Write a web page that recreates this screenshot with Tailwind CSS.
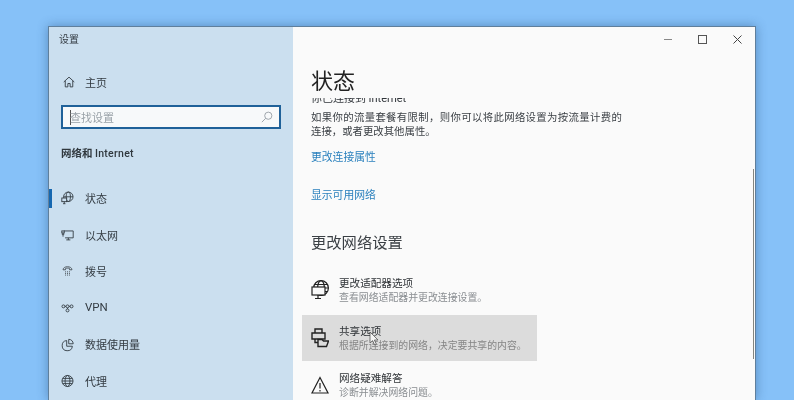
<!DOCTYPE html>
<html lang="zh-CN">
<head>
<meta charset="UTF-8">
<title>设置</title>
<script src="https://cdn.jsdelivr.net/npm/@tailwindcss/browser@4"></script>
</head>
<body class="bg-[#86c1f8] font-['Noto_Sans_CJK_SC','Noto_Sans',sans-serif] overflow-hidden h-[400px]">
<div class="pl-[48px] pt-[26px]">
  <div class="w-[708px] h-[374px] flex border-t border-l border-r border-[#5f7f9c] shadow-[0_0_10px_rgba(30,70,120,0.45)] overflow-hidden blur-[0.35px]">
    <!-- sidebar -->
    <aside class="w-[244px] shrink-0 bg-[#cbdfef] text-[#333b42] relative">
      <div class="text-[10px] leading-[14px] pl-[10px] pt-[5px] h-[43px]">设置</div>
      <div class="flex items-center h-[24px] pl-[14px] gap-[10px] text-[11px]">
        <svg class="w-[12px] h-[12px]" viewBox="0 0 16 16" fill="none" stroke="#333b42" stroke-width="1.2"><path d="M1 8 8 1.5 15 8M3 6.5V14.5H6.5V10H9.5V14.5H13V6.5"/></svg>
        <span>主页</span>
      </div>
      <div class="mt-[11px] ml-[12px] w-[220px] h-[24px] bg-[#f7f9fa] border-2 border-[#1f6199] flex items-center pl-[7px] pr-[6px] text-[11px] text-[#9aa2a8]">
        <span class="w-px h-[15px] bg-[#555] mr-[-1px]"></span>
        <span class="flex-1">查找设置</span>
        <svg class="w-[12px] h-[12px]" viewBox="0 0 14 14" fill="none" stroke="#9aa2a8" stroke-width="1.1"><circle cx="8.5" cy="5.5" r="4.2"/><path d="M5.5 8.5 1 13"/></svg>
      </div>
      <div class="mt-[16px] pl-[12px] text-[10.5px] leading-[16px] font-bold text-[#30383e]">网络和 <span class="font-['Roboto',sans-serif] font-medium tracking-[0.3px]">Internet</span></div>

      <nav class="mt-[18px] flex flex-col text-[11px]">
        <div class="relative flex items-center h-[36.6px] pl-[12px] gap-[11px]">
          <span class="absolute left-0 top-[9px] w-[3px] h-[19px] bg-[#1567b0]"></span>
          <svg class="w-[13px] h-[14px]" viewBox="0 0 16 16" fill="none" stroke="#333b42" stroke-width="1.1"><circle cx="9" cy="6.5" r="5.8"/><ellipse cx="9" cy="6.5" rx="2.6" ry="5.8"/><path d="M3.2 6.5H14.8"/><rect x="1" y="8" width="6" height="4.5" fill="#cbdfef"/><path d="M4 12.5V15M2.5 15H5.5"/></svg>
          <span>状态</span>
        </div>
        <div class="flex items-center h-[36.6px] pl-[12px] gap-[11px]">
          <svg class="w-[13px] h-[14px]" viewBox="0 0 16 16" fill="none" stroke="#333b42" stroke-width="1.1"><path d="M3.5 3H15V11.5H5M9 11.5V14M6.5 14H11.5"/><rect x="1" y="3" width="3" height="2.5"/><path d="M1 7H4M2.5 5.5V10"/></svg>
          <span>以太网</span>
        </div>
        <div class="flex items-center h-[36.6px] pl-[12px] gap-[11px]">
          <svg class="w-[13px] h-[14px]" viewBox="0 0 16 16" fill="none" stroke="#444c52" stroke-width="1.1"><path d="M2.5 6.5C2.5 1.5 13.5 1.5 13.5 6.5H10.5V5C9 4.3 7 4.3 5.5 5V6.5Z"/><path stroke-dasharray="1.2 1.2" d="M5 9H11M5 11H11M5 13H11"/></svg>
          <span>拨号</span>
        </div>
        <div class="flex items-center h-[36.6px] pl-[12px] gap-[11px]">
          <svg class="w-[13px] h-[14px]" viewBox="0 0 16 16" fill="none" stroke="#333b42" stroke-width="1.1"><circle cx="3" cy="6" r="1.8"/><circle cx="13" cy="6" r="1.8"/><circle cx="8" cy="6" r="1.8"/><circle cx="8" cy="11" r="1.8"/><path d="M4.8 6H6.2M9.8 6H11.2M8 7.8V9.2"/></svg>
          <span class="font-['Roboto',sans-serif] text-[11.5px]">VPN</span>
        </div>
        <div class="flex items-center h-[36.6px] pl-[12px] gap-[11px]">
          <svg class="w-[13px] h-[14px]" viewBox="0 0 16 16" fill="none" stroke="#333b42" stroke-width="1.1"><path d="M7 2.5A6.3 6.3 0 1 0 14 9.5H7Z"/><path d="M9.5 1A5.5 5.5 0 0 1 15 6.5H9.5Z"/></svg>
          <span>数据使用量</span>
        </div>
        <div class="flex items-center h-[36.6px] pl-[12px] gap-[11px]">
          <svg class="w-[13px] h-[14px]" viewBox="0 0 16 16" fill="none" stroke="#333b42" stroke-width="1.1"><circle cx="8" cy="8" r="6.8"/><ellipse cx="8" cy="8" rx="3" ry="6.8"/><path d="M1.2 8H14.8M2.2 4.8H13.8M2.2 11.2H13.8"/></svg>
          <span>代理</span>
        </div>
      </nav>
    </aside>

    <!-- main -->
    <main class="flex-1 bg-[#fafafa] relative text-[#30353a]">
      <div class="flex justify-end h-[24px]">
        <div class="w-[35px] flex items-center justify-center"><span class="block w-[8px] h-px bg-[#888]"></span></div>
        <div class="w-[35px] flex items-center justify-center"><span class="block w-[9px] h-[9px] border border-[#555]"></span></div>
        <div class="w-[35px] flex items-center justify-center">
          <svg class="w-[9px] h-[9px]" viewBox="0 0 9 9" stroke="#444" stroke-width="1"><path d="M0.5 0.5 8.5 8.5M8.5 0.5 0.5 8.5"/></svg>
        </div>
      </div>
      <h1 class="pl-[18px] mt-[13px] mb-[4px] text-[22px] leading-[30px] font-normal text-[#222]">状态</h1>

      <div class="h-[302px] overflow-hidden pl-[18px]">
        <p class="mt-[-8px] text-[11px] leading-[14px] h-[14px]">你已连接到 <span class="font-['Roboto',sans-serif]">Internet</span></p>
        <p class="mt-[6px] text-[10.4px] leading-[14px] text-[#3a3f44]"><span class="tracking-[0.34px]">如果你的流量套餐有限制，则你可以将此网络设置为按流量计费的</span><br>连接，或者更改其他属性。</p>
        <a class="block mt-[10px] text-[10.8px] leading-[16px] text-[#2a80bd]">更改连接属性</a>
        <a class="block mt-[22px] text-[10.8px] leading-[16px] text-[#2a80bd]">显示可用网络</a>
        <h2 class="mt-[28px] text-[15.3px] leading-[22px] font-normal text-[#3a3f44]">更改网络设置</h2>

        <div class="mt-[17px] flex items-center gap-[10px] h-[42px]">
          <svg class="w-[18px] h-[20px]" viewBox="0 0 18 20" fill="none" stroke="#222" stroke-width="1.2"><circle cx="10" cy="8" r="7.4"/><ellipse cx="10" cy="8" rx="3.4" ry="7.4"/><path d="M2.6 8H17.4M3.6 4.5H16.4M3.6 11.5H16.4"/><rect x="1" y="7" width="13" height="8" fill="#fafafa"/><path d="M7 15V18M4 18.5H10"/></svg>
          <div class="leading-[14px]">
            <div class="text-[10.6px] text-[#2f3337]">更改适配器选项</div>
            <div class="text-[9.9px] text-[#8a8e92]">查看网络适配器并更改连接设置。</div>
          </div>
        </div>
        <div class="relative mt-[4px] ml-[-9px] w-[235px] h-[46px] bg-[#dcdcdc] flex items-center gap-[10px] pl-[9px]">
          <svg class="w-[18px] h-[20px]" viewBox="0 0 18 20" fill="none" stroke="#222" stroke-width="1.4"><path d="M4 5V1H11V5M1 5H14V11H1ZM4 11V14.5H8"/><path d="M7 11.5H11L12.5 13H17.5L15.5 18.5H7Z" fill="#dcdcdc"/></svg>
          <div class="leading-[14px]">
            <div class="text-[10.6px] text-[#2f3337]">共享选项</div>
            <div class="text-[9.9px] text-[#858585]">根据所连接到的网络，决定要共享的内容。</div>
          </div>
          <svg class="absolute left-[67px] top-[16px] w-[10px] h-[15px]" viewBox="0 0 10 15" fill="#f4f4f4" stroke="#555" stroke-width="0.8"><path d="M1 1V12L3.6 9.6 5.6 14 7.4 13.2 5.4 9H9Z"/></svg>
        </div>
        <div class="mt-[3px] flex items-center gap-[10px] h-[42px]">
          <svg class="w-[18px] h-[20px]" viewBox="0 0 18 20" fill="none" stroke="#222" stroke-width="1.2"><path d="M9 2.5 1 18H17ZM9 8V13.5M9 15V16.5"/></svg>
          <div class="leading-[14px]">
            <div class="text-[10.6px] text-[#2f3337]">网络疑难解答</div>
            <div class="text-[9.9px] text-[#8a8e92]">诊断并解决网络问题。</div>
          </div>
        </div>
      </div>
      <span class="absolute right-[1px] top-[142px] w-px h-[190px] bg-[#85857f]"></span>
    </main>
  </div>
</div>
</body>
</html>
